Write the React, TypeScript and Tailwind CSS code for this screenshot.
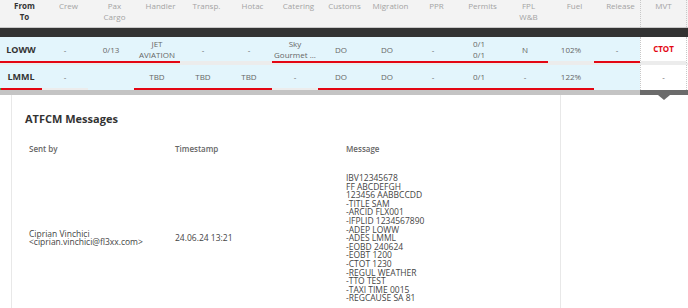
import React from 'react';

const headers = [
  ['From', 'To'],
  ['Crew'],
  ['Pax', 'Cargo'],
  ['Handler'],
  ['Transp.'],
  ['Hotac'],
  ['Catering'],
  ['Customs'],
  ['Migration'],
  ['PPR'],
  ['Permits'],
  ['FPL', 'W&B'],
  ['Fuel'],
  ['Release'],
];

type Leg = {
  cells: string[][];
  bars: string[];
  mvt: string;
  height: string;
};

const legs: Leg[] = [
  {
    cells: [
      ['LOWW'], ['-'], ['0/13'], ['JET', 'AVIATION'], ['-'], ['-'], ['Sky', 'Gourmet ...'],
      ['DO'], ['DO'], ['-'], ['0/1', '0/1'], ['N'], ['102%'], ['-'],
    ],
    bars: ['r', 'r', 'r', 'r', 'g', 'g', 'r', 'r', 'r', 'r', 'r', 'r', 'g', 'r'],
    mvt: 'CTOT',
    height: 'h-[24px]',
  },
  {
    cells: [
      ['LMML'], ['-'], [], ['TBD'], ['TBD'], ['TBD'], ['-'],
      ['DO'], ['DO'], ['-'], ['0/1'], ['-'], ['122%'], [],
    ],
    bars: ['r', 'g', '', 'r', 'r', 'r', 'g', 'r', 'r', 'r', 'r', 'r', 'r', ''],
    mvt: '-',
    height: 'h-[23px]',
  },
];

const message = [
  'IBV12345678',
  'FF ABCDEFGH',
  '123456 AABBCCDD',
  '-TITLE SAM',
  '-ARCID FLX001',
  '-IFPLID 1234567890',
  '-ADEP LOWW',
  '-ADES LMML',
  '-EOBD 240624',
  '-EOBT 1200',
  '-CTOT 1230',
  '-REGUL WEATHER',
  '-TTO TEST',
  '-TAXI TIME 0015',
  '-REGCAUSE SA 81',
];

const barColor = (b: string) => {
  if (b === 'r') return 'bg-[#e30613]';
  if (b === 'g') return 'bg-[#ececec]';
  return 'bg-transparent';
};

const LegRow = ({ leg, index }: { leg: Leg; index: number }) => (
  <div className="flex">
    <div className="flex bg-[#e3f5fc]">
      {leg.cells.map((lines, i) => (
        <div key={i} className={`${i === 0 ? 'w-[42px]' : 'w-[46px]'} flex flex-col`}>
          <div
            className={`${leg.height} flex flex-col items-center justify-center leading-[11px] ${
              i === 0 ? 'text-[9px] font-bold text-[#333]' : 'text-[8px] text-[#666]'
            }`}
          >
            {lines.map((l) => (
              <span key={l} className="whitespace-nowrap">{l}</span>
            ))}
          </div>
          <div className={`h-[2px] flex ${barColor(leg.bars[i])}`}>
            {index === 1 && i === 0 && <div className="w-[1px] bg-[#3aa845]" />}
          </div>
        </div>
      ))}
    </div>
    <div className="w-[47px] flex flex-col bg-white border-x border-dotted border-[#c8c8c8]">
      <div
        className={`${leg.height} flex items-center justify-center ${
          leg.mvt === 'CTOT' ? 'text-[8px] font-bold text-[#e30613]' : 'text-[8px] text-[#666]'
        }`}
      >
        {leg.mvt}
      </div>
      <div className={`h-[2px] ${index === 0 ? 'bg-[#ececec]' : 'bg-white'}`} />
    </div>
    <div className="flex-1 bg-white" />
  </div>
);

export default function App() {
  return (
    <div className="w-[688px] h-[308px] overflow-hidden bg-white font-['Open_Sans',sans-serif]">
      {/* Services header */}
      <div className="flex bg-[#f3f3f3] border-b border-[#c9c9c9]">
        {headers.map((lines, i) => (
          <div
            key={i}
            className={`${i === 0 ? 'w-[42px] font-bold text-[#333]' : 'w-[46px] text-[#a3a3a3]'} h-[27px] pl-[7px] flex flex-col items-center text-[8px] leading-[11px]`}
          >
            {lines.map((l) => (
              <span key={l} className="whitespace-nowrap">{l}</span>
            ))}
          </div>
        ))}
        <div className="w-[47px] h-[27px] flex justify-center text-[8px] leading-[11px] text-[#a3a3a3] border-x border-dotted border-[#c8c8c8]">
          MVT
        </div>
      </div>
      <div className="h-[9px] bg-[#333]" />

      <LegRow leg={legs[0]} index={0} />
      <div className="h-[2px] bg-[#ececec]" />
      <LegRow leg={legs[1]} index={1} />

      {/* bottom strip */}
      <div className="flex h-[5px]">
        <div className="w-[640px] bg-[#c4c4c4]" />
        <div className="relative flex-1 bg-[#6b6b6b]">
          <div className="absolute left-[18px] top-[5px] w-0 h-0 border-l-[6px] border-r-[6px] border-t-[5px] border-l-transparent border-r-transparent border-t-[#6b6b6b]" />
        </div>
      </div>

      {/* ATFCM messages */}
      <div className="flex">
        <div className="w-[11px]" />
        <div className="w-[550px] h-[220px] border-x border-[#e8e8e8] pl-[13px]">
          <div className="pt-[16px] text-[11px] leading-[15px] font-bold text-[#333]">ATFCM Messages</div>
          <div className="mt-[17px] flex text-[8px] leading-[11px] font-semibold text-[#666]">
            <div className="w-[146px] pl-[4px]">Sent by</div>
            <div className="w-[171px] pl-[4px]">Timestamp</div>
            <div className="pl-[4px]">Message</div>
          </div>
          <div className="mt-[20px] flex items-center text-[8.5px] leading-[8.6px] text-[#444]">
            <div className="w-[146px] pl-[4px] flex flex-col">
              <span>Ciprian Vinchici</span>
              <span>&lt;ciprian.vinchici@fl3xx.com&gt;</span>
            </div>
            <div className="w-[171px] pl-[4px]">24.06.24 13:21</div>
            <div className="pl-[4px] flex flex-col">
              {message.map((m) => (
                <span key={m} className="whitespace-nowrap">{m}</span>
              ))}
            </div>
          </div>
        </div>
        <div className="flex-1" />
      </div>
    </div>
  );
}
